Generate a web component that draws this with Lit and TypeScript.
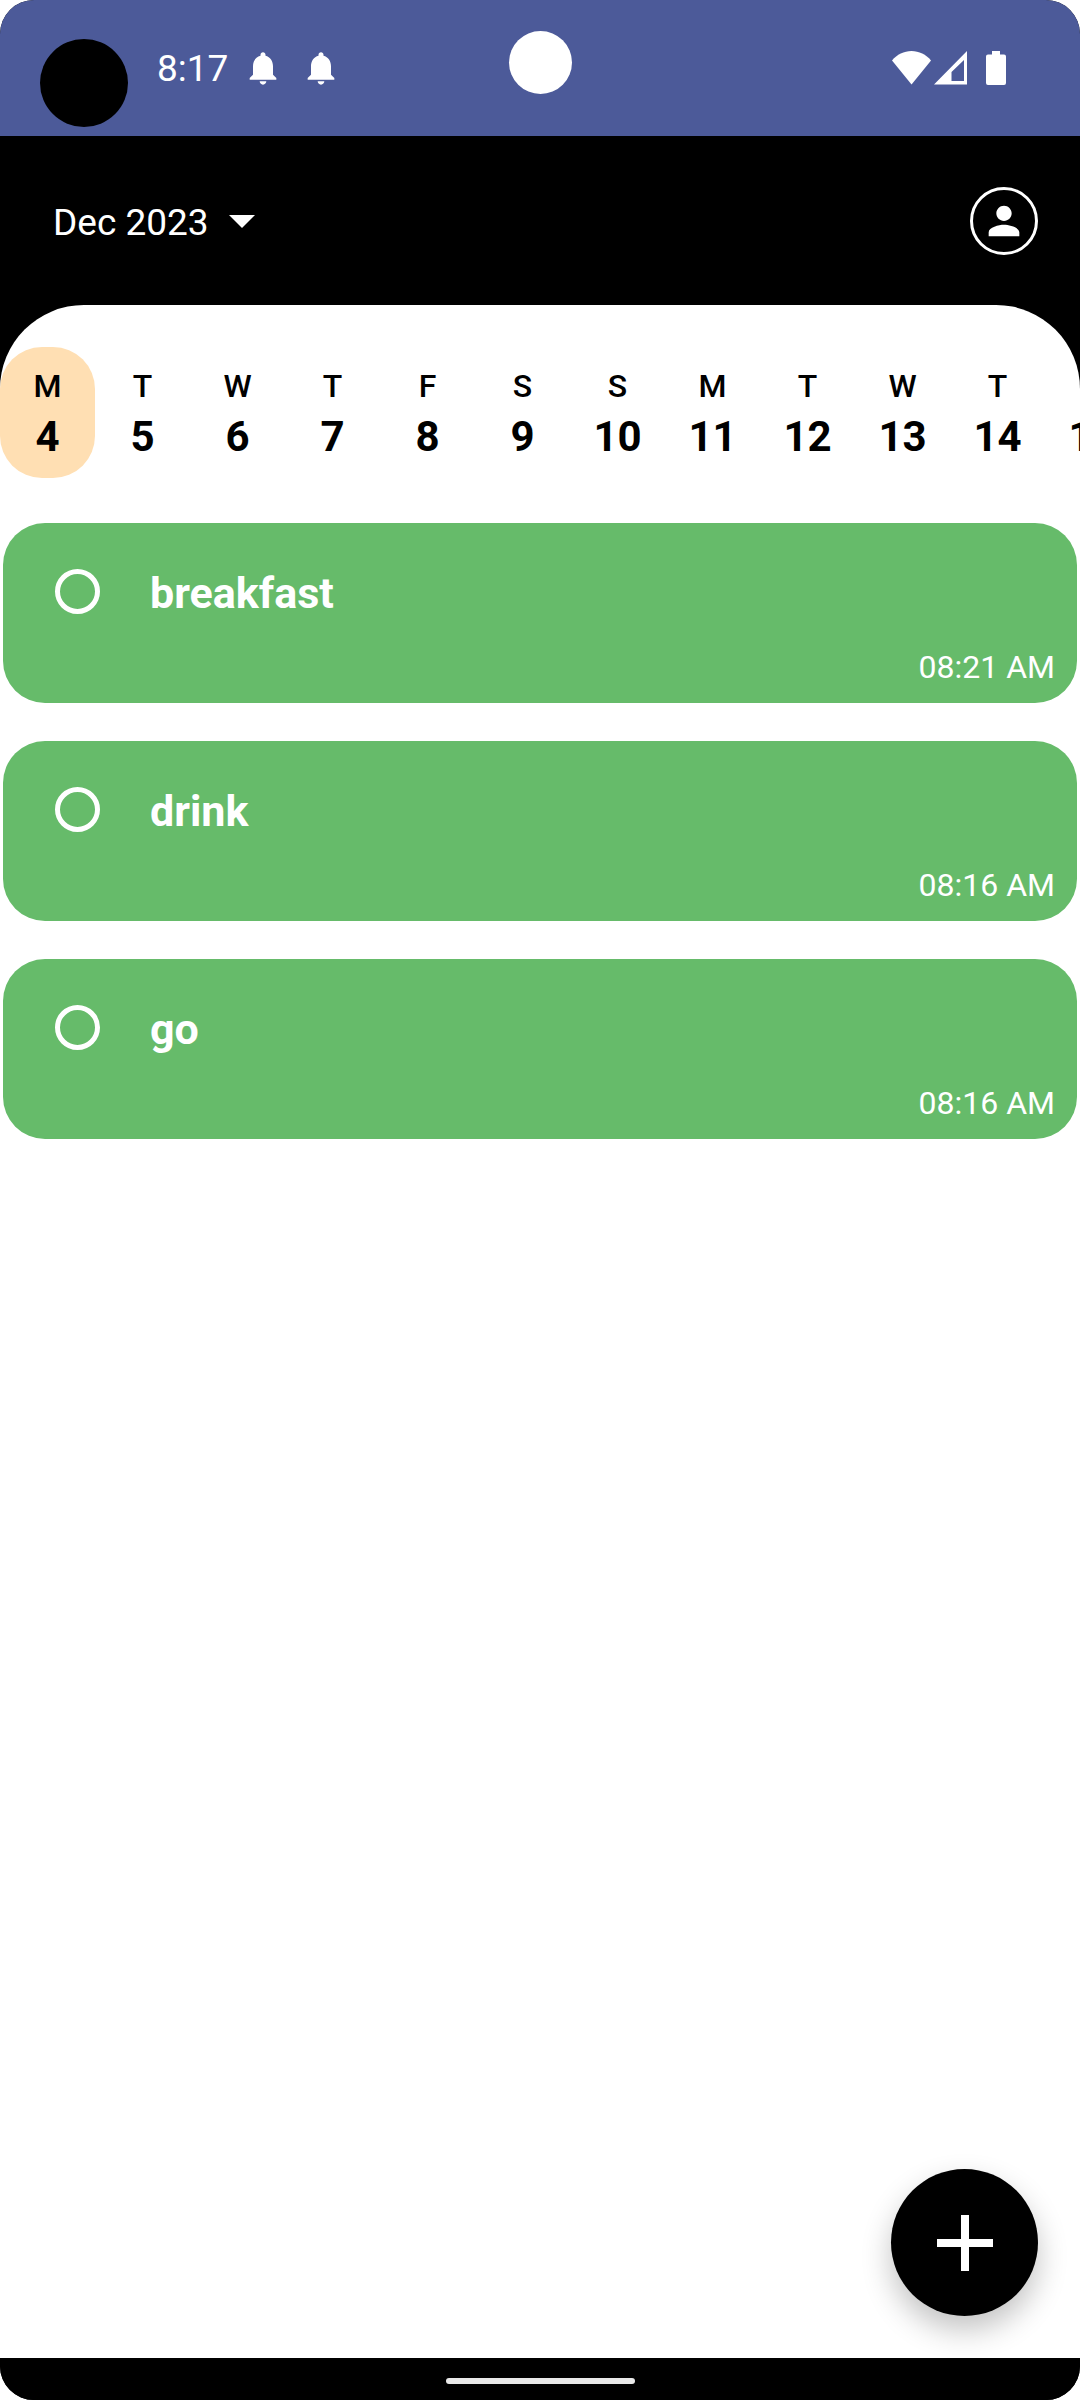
import { LitElement, html, css, svg } from "lit";
import { customElement, property, state } from "lit/decorators.js";
import { classMap } from "lit/directives/class-map.js";

interface Day {
  letter: string;
  date: number;
}

interface Task {
  id: string;
  title: string;
  time: string;
  done: boolean;
}

const WEEK = ["M", "T", "W", "T", "F", "S", "S"];
const DAYS: Day[] = Array.from({ length: 12 }, (_, i) => ({
  letter: WEEK[i % 7],
  date: 4 + i,
}));

const bell = svg`<path fill="currentColor" d="M12 22c1.1 0 2-.9 2-2h-4c0 1.1.89 2 2 2zm6-6v-5c0-3.07-1.64-5.64-4.5-6.32V4c0-.83-.67-1.5-1.5-1.5s-1.5.67-1.5 1.5v.68C7.63 5.36 6 7.92 6 11v5l-2 2v1h16v-1l-2-2z"/>`;

@customElement("status-bar")
export class StatusBar extends LitElement {
  static styles = css`
    :host {
      display: flex;
      position: relative;
      align-items: center;
      justify-content: space-between;
      box-sizing: border-box;
      height: 136px;
      padding: 0 74px 0 157px;
      background: #4c5a99;
      color: #fff;
    }
    .group {
      display: flex;
      align-items: center;
    }
    .clock {
      margin-right: 15px;
      padding-top: 2px;
      font-size: 37px;
      line-height: 44px;
    }
    .bells {
      display: flex;
      gap: 18px;
    }
    .signal {
      margin: 0 19px 0 3px;
    }
    svg {
      display: block;
    }
    .cutout,
    .camera {
      position: absolute;
      border-radius: 50%;
    }
    .cutout {
      left: 40px;
      top: 39px;
      width: 88px;
      height: 88px;
      background: #000;
    }
    .camera {
      left: calc(50% - 31px);
      top: 31px;
      width: 63px;
      height: 63px;
      background: #fff;
    }
  `;

  render() {
    return html`
      <span class="cutout"></span>
      <span class="camera"></span>
      <div class="group">
        <span class="clock">8:17</span>
        <span class="bells">
          <svg width="40" height="40" viewBox="0 0 24 24" aria-hidden="true">${bell}</svg>
          <svg width="40" height="40" viewBox="0 0 24 24" aria-hidden="true">${bell}</svg>
        </span>
      </div>
      <div class="group">
        <svg width="39" height="34" viewBox="0 0 39 34" aria-hidden="true">
          <path fill="currentColor" d="M19.500 33.500L0 9.500C5 3.500 12 0 19.500 0S34 3.500 39 9.500z" />
        </svg>
        <svg class="signal" width="33" height="34" viewBox="0 0 33 34" aria-hidden="true">
          <path fill="currentColor" fill-rule="evenodd" d="M33 0V33.500H0zM30 9L17.500 21V30H30z" />
        </svg>
        <svg width="20" height="34" viewBox="0 0 20 34" aria-hidden="true">
          <path fill="currentColor" d="M6 0h8v3.500h4a2 2 0 0 1 2 2V32a2 2 0 0 1-2 2H2a2 2 0 0 1-2-2V5.500a2 2 0 0 1 2-2h4z" />
        </svg>
      </div>
    `;
  }
}

@customElement("day-strip")
export class DayStrip extends LitElement {
  @property({ type: Number }) selected = 4;

  static styles = css`
    :host {
      display: block;
    }
    .strip {
      display: flex;
      overflow-x: auto;
      scrollbar-width: none;
    }
    .day {
      display: flex;
      flex: 0 0 95px;
      flex-direction: column;
      align-items: center;
      gap: 7px;
      margin: 0;
      padding: 20px 0 16px;
      border: 0;
      border-radius: 42px;
      background: none;
      color: #000;
      font: inherit;
    }
    .selected {
      background: #ffdfb3;
    }
    .letter {
      font-size: 32px;
      font-weight: 500;
      line-height: 38px;
    }
    .date {
      font-size: 42px;
      font-weight: 700;
      line-height: 50px;
    }
  `;

  private pick(date: number) {
    this.selected = date;
  }

  render() {
    return html`<div class="strip">
      ${DAYS.map(
        (d) => html`<button
          type="button"
          class=${classMap({ day: true, selected: d.date === this.selected })}
          @click=${() => this.pick(d.date)}
        >
          <span class="letter">${d.letter}</span>
          <span class="date">${d.date}</span>
        </button>`
      )}
    </div>`;
  }
}

@customElement("task-card")
export class TaskCard extends LitElement {
  @property({ attribute: false }) task!: Task;

  static styles = css`
    :host {
      display: flex;
      flex-direction: column;
      justify-content: space-between;
      box-sizing: border-box;
      min-height: 180px;
      padding: 46px 22px 17px 52px;
      border-radius: 42px;
      background: #66bb6a;
      color: #fff;
    }
    .row {
      display: flex;
      align-items: flex-start;
      gap: 50px;
    }
    .check {
      appearance: none;
      flex: none;
      box-sizing: border-box;
      width: 45px;
      height: 45px;
      margin: 0;
      border: 5px solid #fff;
      border-radius: 50%;
    }
    .check:checked {
      background: #fff;
    }
    .title {
      font-size: 43px;
      font-weight: 700;
      line-height: 48px;
    }
    .time {
      align-self: flex-end;
      font-size: 32px;
      line-height: 38px;
    }
  `;

  render() {
    const { id, title, time, done } = this.task;
    return html`
      <div class="row">
        <input class="check" type="checkbox" id=${id} .checked=${done} />
        <label class="title" for=${id}>${title}</label>
      </div>
      <time class="time">${time}</time>
    `;
  }
}

@customElement("app-root")
export class AppRoot extends LitElement {
  @state() private tasks: Task[] = [
    { id: "task-1", title: "breakfast", time: "08:21 AM", done: false },
    { id: "task-2", title: "drink", time: "08:16 AM", done: false },
    { id: "task-3", title: "go", time: "08:16 AM", done: false },
  ];

  static styles = css`
    :host {
      display: block;
      background: #fff;
      font-family: Roboto, "Liberation Sans", sans-serif;
    }
    .screen {
      display: flex;
      position: relative;
      flex-direction: column;
      min-height: 100vh;
      overflow: hidden;
      border-radius: 34px;
      background: #000;
    }
    .header {
      display: flex;
      align-items: center;
      justify-content: space-between;
      padding: 51px 42px 50px 53px;
    }
    .month,
    .avatar,
    .add {
      display: flex;
      align-items: center;
      margin: 0;
      padding: 0;
      border: 0;
      background: none;
      color: #fff;
      font: inherit;
    }
    .month {
      gap: 20px;
      font-size: 37px;
      line-height: 44px;
    }
    .month-name {
      padding-top: 4px;
    }
    .avatar {
      justify-content: center;
      box-sizing: border-box;
      width: 68px;
      height: 68px;
      border: 3px solid #fff;
      border-radius: 50%;
    }
    .sheet {
      flex: 1;
      padding-top: 42px;
      border-radius: 84px 84px 0 0;
      background: #fff;
    }
    .tasks {
      display: flex;
      flex-direction: column;
      gap: 38px;
      padding: 45px 3px 38px;
    }
    .add {
      position: absolute;
      right: 42px;
      bottom: 84px;
      justify-content: center;
      width: 147px;
      height: 147px;
      border-radius: 50%;
      background: #000;
      box-shadow: 0 14px 30px rgba(0, 0, 0, 0.24);
    }
    .nav {
      display: flex;
      align-items: center;
      justify-content: center;
      height: 42px;
      padding-top: 4px;
      box-sizing: border-box;
      background: #000;
    }
    .pill {
      width: 189px;
      height: 6px;
      border-radius: 3px;
      background: #e9e9e9;
    }
    svg {
      display: block;
    }
  `;

  render() {
    return html`
      <div class="screen">
        <status-bar></status-bar>
        <header class="header">
          <button class="month" type="button">
            <span class="month-name">Dec 2023</span>
            <svg width="26" height="13" viewBox="0 0 26 13" aria-hidden="true">
              <path fill="currentColor" d="M0 0h26L13 13z" />
            </svg>
          </button>
          <button class="avatar" type="button" aria-label="Profile">
            <svg width="46" height="46" viewBox="0 0 24 24" aria-hidden="true">
              <path
                fill="currentColor"
                d="M12 12c2.210 0 4-1.790 4-4s-1.790-4-4-4-4 1.790-4 4 1.790 4 4 4zm0 2c-2.670 0-8 1.340-8 4v2h16v-2c0-2.660-5.330-4-8-4z"
              />
            </svg>
          </button>
        </header>
        <main class="sheet">
          <day-strip></day-strip>
          <div class="tasks">
            ${this.tasks.map((t) => html`<task-card .task=${t}></task-card>`)}
          </div>
        </main>
        <button class="add" type="button" aria-label="Add task">
          <svg width="56" height="56" viewBox="0 0 56 56" aria-hidden="true">
            <path fill="currentColor" d="M24 0h8v24h24v8H32v24h-8V32H0v-8h24z" />
          </svg>
        </button>
        <footer class="nav"><span class="pill"></span></footer>
      </div>
    `;
  }
}
